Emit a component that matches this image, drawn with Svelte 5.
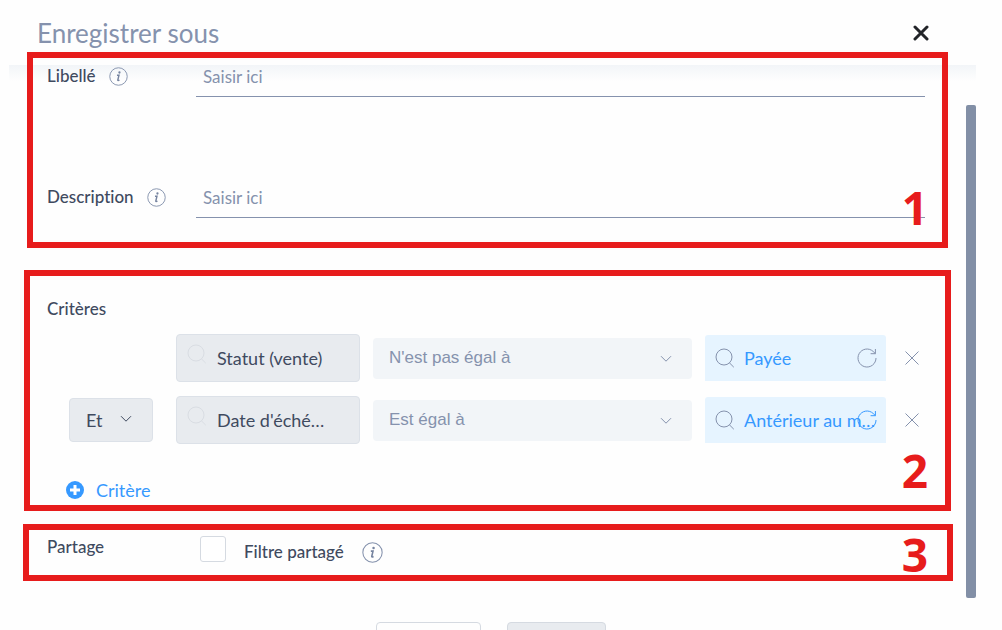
<script>
	const fields = [
		{ id: 'label', name: 'Libellé' },
		{ id: 'description', name: 'Description' }
	];

	const operators = ["N'est pas égal à", 'Est égal à'];

	let criteria = [
		{ field: 'Statut (vente)', operator: operators[0], value: 'Payée', active: false },
		{ field: "Date d'éché…", operator: operators[1], value: 'Antérieur au m…', active: true }
	];

	let link = 'Et';
	let shared = false;
</script>

{#snippet info(size)}
	<svg width={size} height={size} viewBox="0 0 20 20" fill="none" stroke="#8592ad" aria-hidden="true">
		<circle cx="10" cy="10" r="9.2" stroke-width="1"></circle>
		<circle cx="11" cy="5.8" r="1.2" fill="#75839f" stroke="none"></circle>
		<path d="M8.4 8.7h2.1L9.3 13.6q-.2 1.1 1.7.2" stroke="#75839f" stroke-width="1.5"></path>
	</svg>
{/snippet}

{#snippet search()}
	<svg class="search" width="20" height="20" viewBox="0 0 20 20" fill="none" stroke="currentColor" aria-hidden="true">
		<circle cx="9" cy="9" r="8"></circle>
		<path d="M14.2 14.6l4.6 4.6"></path>
	</svg>
{/snippet}

{#snippet chevron()}
	<svg class="chevron" width="12" height="8" viewBox="0 0 12 8" fill="none" stroke="currentColor" aria-hidden="true">
		<path d="M1 1.2l5 5 5-5"></path>
	</svg>
{/snippet}

<div class="dialog" role="dialog" aria-labelledby="title">
	<header>
		<h1 id="title">Enregistrer sous</h1>
		<button class="close" aria-label="Fermer">
			<svg width="16" height="16" viewBox="0 0 16 16" stroke="#222428" stroke-width="3" stroke-linecap="round">
				<path d="M2 2l12 12M14 2L2 14"></path>
			</svg>
		</button>
	</header>

	<div class="body">
		<form>
			<section class="general">
				{#each fields as field}
					<div class="row">
						<label for={field.id}>{field.name} {@render info(19)}</label>
						<input id={field.id} type="text" placeholder="Saisir ici" />
					</div>
				{/each}
				<div class="mark"><b>1</b></div>
			</section>

			<section class="criteria">
				<h2>Critères</h2>
				{#each criteria as item, i}
					<div class="criterion">
						<div class="link">
							{#if i > 0}
								<select aria-label="Opérateur logique" bind:value={link}>
									<option>Et</option>
									<option>Ou</option>
								</select>
								{@render chevron()}
							{/if}
						</div>
						<button type="button" class="field">
							{@render search()}
							<span>{item.field}</span>
						</button>
						<div class="operator">
							<select aria-label="Comparaison" bind:value={item.operator}>
								{#each operators as operator}
									<option>{operator}</option>
								{/each}
							</select>
							{@render chevron()}
						</div>
						<div class="value">
							{@render search()}
							<input type="text" aria-label="Valeur" bind:value={item.value} />
							<button type="button" class="reset" class:active={item.active} aria-label="Réinitialiser">
								<svg width="20" height="20" viewBox="0 0 20 20" fill="none" stroke="currentColor">
									<path d="M19 10A9 9 0 1 1 16.2 3.5L18.4 5.6"></path>
									<path d="M18.4 1V5.7h-4.8"></path>
								</svg>
							</button>
						</div>
						<button type="button" class="remove" aria-label="Supprimer">
							<svg width="14" height="14" viewBox="0 0 14 14" stroke="#8592ad">
								<path d="M.5.5l13 13M13.5.5l-13 13"></path>
							</svg>
						</button>
					</div>
				{/each}
				<button type="button" class="add">
					<svg width="18" height="18" viewBox="0 0 18 18" aria-hidden="true">
						<circle cx="9" cy="9" r="9" fill="#3699ff"></circle>
						<path d="M9 4v10M4 9h10" stroke="#fff" stroke-width="3"></path>
					</svg>
					Critère
				</button>
				<div class="mark"><b>2</b></div>
			</section>

			<section class="sharing">
				<h2>Partage</h2>
				<input id="shared" type="checkbox" bind:checked={shared} />
				<label for="shared">Filtre partagé {@render info(21)}</label>
				<div class="mark"><b>3</b></div>
			</section>
		</form>
		<div class="scrollbar"></div>
	</div>

	<footer>
		<button class="cancel" aria-label="Annuler"></button>
		<button class="save" aria-label="Enregistrer"></button>
	</footer>
</div>

<style>
	:global(body) {
		margin: 0;
		overflow: hidden;
		background: #fefefe;
	}

	.dialog {
		margin: 0 26px 0 9px;
		font-family: Lato, 'Open Sans', sans-serif;
		font-size: 18px;
		font-variant-ligatures: none;
		line-height: 24px;
		color: #3f4a5f;
	}

	button,
	input,
	select {
		box-sizing: border-box;
		margin: 0;
		padding: 0;
		border: 0;
		background: none;
		font: inherit;
		color: inherit;
		outline: none;
	}

	svg {
		display: block;
		flex: none;
	}

	header {
		display: flex;
		align-items: center;
		justify-content: space-between;
		height: 65px;
		padding: 0 47px 0 28px;
		box-sizing: border-box;
	}

	h1 {
		margin: 0;
		font-size: 26px;
		font-weight: 400;
		color: #8592ad;
	}

	.body {
		display: flex;
		background: linear-gradient(#f2f5f8, #fefefe 16px);
	}

	form {
		flex: 1;
		min-width: 0;
		padding: 0 18px 17px;
	}

	.scrollbar {
		width: 10px;
		margin-top: 40px;
		border-radius: 2px;
		background: #828fa6;
	}

	section {
		position: relative;
	}

	h2,
	label {
		margin: 0;
		font-size: 17px;
		font-weight: 500;
	}

	label {
		display: flex;
		align-items: center;
		gap: 13px;
	}

	/* numbered callouts drawn over each section */
	.mark {
		position: absolute;
		inset: 0 -3px;
		border: 6px solid #e71c1c;
		pointer-events: none;
	}

	.mark b {
		position: absolute;
		right: 17px;
		bottom: 12px;
		font: 700 46px/46px 'Open Sans', sans-serif;
		color: #e71c1c;
	}

	.general {
		display: flex;
		flex-direction: column;
		gap: 89px;
		padding: 0 23px 30px 20px;
	}

	.general .mark {
		inset: -13px 0 0;
	}

	.general .mark b {
		right: 14px;
	}

	.row {
		display: flex;
		align-items: flex-start;
	}

	.row label {
		width: 149px;
		line-height: 22px;
	}

	.row input {
		flex: 1;
		min-width: 0;
		height: 32px;
		padding: 0 7px 8px;
		border-bottom: 1px solid #8592ad;
		font-size: 17px;
	}

	.row input::placeholder {
		color: #8592ad;
		opacity: 1;
	}

	.criteria {
		margin-top: 22px;
		padding: 27px 29px 9px 20px;
	}

	.criteria h2 {
		margin-bottom: 13px;
	}

	.criterion {
		display: flex;
		align-items: center;
		height: 48px;
		margin: 0 0 14px 22px;
	}

	.link,
	.operator,
	.value {
		position: relative;
	}

	.link {
		width: 84px;
		margin-right: 23px;
	}

	select {
		display: block;
		width: 100%;
		appearance: none;
		border-radius: 4px;
	}

	.link select {
		height: 44px;
		padding-left: 16px;
		border: 1px solid #dce1e8;
		background: #e8ebef;
	}

	.chevron {
		position: absolute;
		top: 17px;
		right: 21px;
		pointer-events: none;
	}

	.field {
		display: flex;
		align-items: center;
		gap: 10px;
		width: 184px;
		height: 48px;
		padding: 0 10px;
		border: 1px solid #dce1e8;
		border-radius: 4px;
		background: #e8ebef;
		white-space: nowrap;
	}

	.field .search {
		margin-bottom: 8px;
		color: #d9dde3;
	}

	.operator {
		flex: 1;
		margin: 0 13px;
		color: #8592ad;
	}

	.operator select {
		height: 41px;
		padding-left: 16px;
		background: #f2f5f8;
		font-family: 'Liberation Sans', sans-serif;
		font-size: 17px;
	}

	.operator .chevron {
		right: 20px;
	}

	.value {
		width: 181px;
		margin-right: 19px;
		color: #8592ad;
	}

	.value input {
		display: block;
		width: 100%;
		height: 46px;
		padding-left: 39px;
		border-radius: 3px 3px 0 0;
		background: #e6f4ff;
		color: #3699ff;
	}

	.value .search,
	.reset {
		position: absolute;
		top: 13px;
		left: 10px;
	}

	.reset {
		left: auto;
		right: 9px;
	}

	.reset.active {
		color: #3699ff;
	}

	.add {
		display: flex;
		align-items: center;
		gap: 12px;
		margin: 34px 0 0 19px;
		color: #3699ff;
	}

	.sharing {
		display: flex;
		align-items: flex-start;
		margin-top: 13px;
		padding: 11px 20px 17px;
	}

	.sharing h2 {
		width: 153px;
	}

	.sharing input {
		appearance: none;
		width: 26px;
		height: 26px;
		margin: 1px 18px 0 0;
		border: 1px solid #d5dae1;
		border-radius: 3px;
		background: #fff;
	}

	.sharing input:checked {
		background: #3699ff;
	}

	.sharing label {
		gap: 18px;
		padding-top: 5px;
	}

	.sharing .mark {
		inset: 0 -5px 0 -4px;
	}

	.sharing .mark b {
		right: 19px;
		bottom: -2px;
	}

	footer {
		display: flex;
		justify-content: center;
		gap: 26px;
		padding: 24px 4px 0 0;
	}

	footer button {
		width: 105px;
		height: 44px;
		border: 1px solid #d5dae1;
		border-radius: 4px;
	}

	footer .save {
		width: 99px;
		background: #e8ebef;
	}
</style>
